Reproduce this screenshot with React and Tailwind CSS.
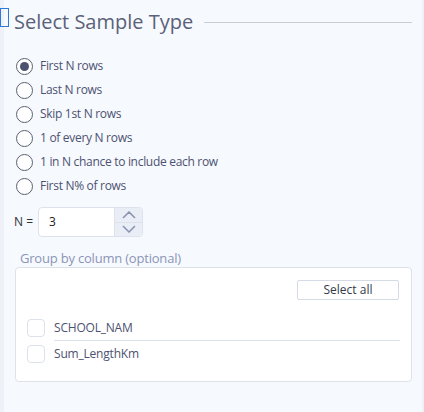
import React, { useState } from 'react'

const options = [
  'First N rows',
  'Last N rows',
  'Skip 1st N rows',
  '1 of every N rows',
  '1 in N chance to include each row',
  'First N% of rows',
]

const columns = ['SCHOOL_NAM', 'Sum_LengthKm']

function Radio({ checked }){
  return (
    <span className="w-[17px] h-[17px] rounded-full border-[1.5px] border-[#5c6173] bg-white flex items-center justify-center shrink-0">
      {checked && <span className="w-[9px] h-[9px] rounded-full bg-[#4b5370]" />}
    </span>
  )
}

export default function App(){
  const [sel, setSel] = useState(0)
  const [n, setN] = useState(3)

  return (
    <div className="w-[424px] h-[412px] bg-[#eef1f8] flex overflow-hidden" style={{ fontFamily: '"Open Sans", "Noto Sans", sans-serif' }}>
      <div className="relative ml-[4px] w-[418px] h-full bg-[#f6f9fe] pt-[7px]">
        <div className="absolute left-[-4px] top-[8px] w-[9px] h-[19px] border-[1.5px] border-[#2b7bd6]" />

        <div className="flex items-center pl-[10px] pr-[10px]">
          <h1 className="text-[20px] text-[#5b6178] leading-[30px] whitespace-nowrap">Select Sample Type</h1>
          <div className="flex-1 h-px bg-[#c9cdd5] ml-[11px] mt-[1px]" />
        </div>

        <div className="mt-[17px] pl-[12px] flex flex-col">
          {options.map((o, i) => (
            <label key={o} className="flex items-center gap-[7px] h-[24px] cursor-pointer" onClick={() => setSel(i)}>
              <Radio checked={sel === i} />
              <span className="text-[12px] tracking-[-0.3px] text-[#4d5270]">{o}</span>
            </label>
          ))}
        </div>

        <div className="mt-[9px] pl-[10px] flex items-center">
          <span className="text-[12px] text-[#333] w-[24px]">N =</span>
          <div className="flex h-[30px] border border-[#dde2ec] rounded-[4px] bg-white overflow-hidden">
            <input
              value={n}
              onChange={e => setN(e.target.value)}
              className="w-[75px] pl-[10px] text-[12px] text-[#222] outline-none"
            />
            <div className="w-[28px] flex flex-col bg-[#e9edf6] border-l border-[#dde2ec]">
              <button onClick={() => setN(v => Number(v) + 1)} className="flex-1 flex items-center justify-center border-b border-[#dde2ec]">
                <svg width="14" height="8" viewBox="0 0 14 8"><path d="M1 7 L7 1 L13 7" fill="none" stroke="#8a92ad" strokeWidth="1.5" /></svg>
              </button>
              <button onClick={() => setN(v => Number(v) - 1)} className="flex-1 flex items-center justify-center">
                <svg width="14" height="8" viewBox="0 0 14 8"><path d="M1 1 L7 7 L13 1" fill="none" stroke="#8a92ad" strokeWidth="1.5" /></svg>
              </button>
            </div>
          </div>
        </div>

        <div className="mt-[12px] pl-[16px] text-[13px] tracking-[-0.2px] text-[#8c95b6] leading-[18px]">Group by column (optional)</div>

        <div className="mt-0 ml-[11px] mr-[10px] h-[115px] bg-white border border-[#dde2ea] rounded-[4px] px-[11px] pt-[12px]">
          <div className="flex justify-end pr-[1px]">
            <button className="w-[102px] h-[20px] border border-[#d5dbe5] rounded-[2px] text-[12px] text-[#333a4a] leading-none">Select all</button>
          </div>
          <div className="mt-[15px]">
            {columns.map((c, i) => (
              <div key={c} className="flex items-center h-[26px]">
                <span className="w-[18px] h-[18px] rounded-[4px] border border-[#dce1ec] bg-white shrink-0" />
                <span className={`ml-[9px] flex-1 h-full flex items-center text-[12px] tracking-[-0.2px] text-[#4d5270] ${i === 0 ? 'border-b border-[#dde2ea]' : ''}`}>{c}</span>
              </div>
            ))}
          </div>
        </div>
      </div>
    </div>
  )
}
